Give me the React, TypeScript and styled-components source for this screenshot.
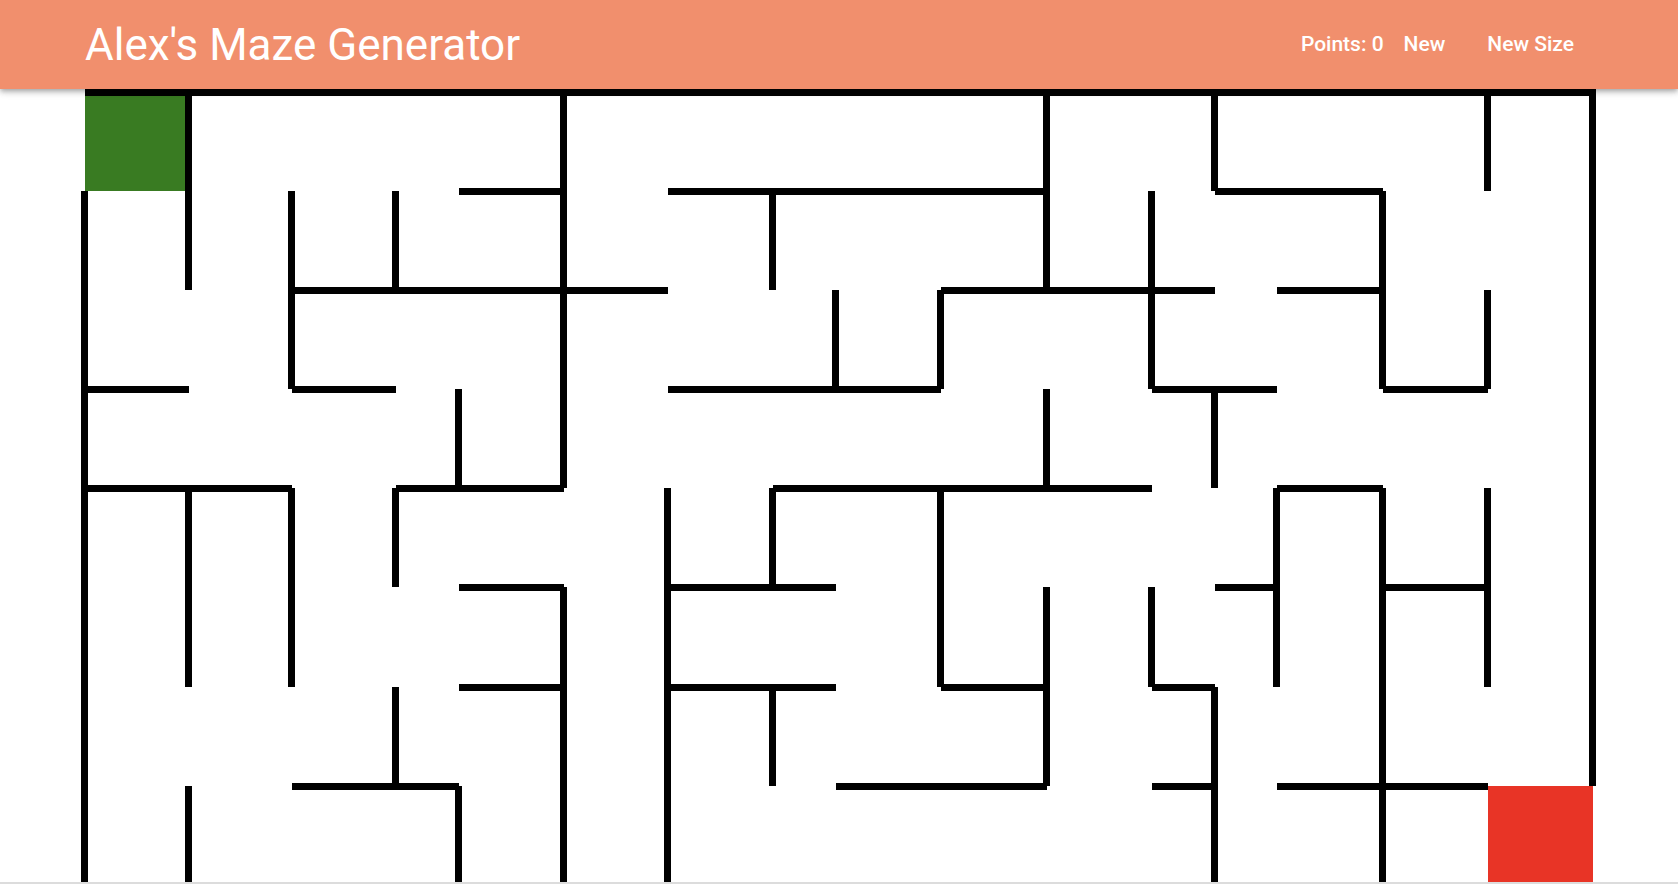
import React from 'react'
import styled, { createGlobalStyle } from 'styled-components'

const GlobalStyle = createGlobalStyle`
  html, body {
    margin: 0;
    padding: 0;
    background: #fff;
  }
  body {
    font-family: Roboto, 'Liberation Sans', Arial, sans-serif;
    overflow: hidden;
  }
`

// horizontal walls: one string per grid line (top of row r), one char per column
const HWALLS = [
  '1111111111111111',
  '0000101111001100',
  '0011110001110100',
  '1010001110011010',
  '1101100111100100',
  '0000101100001010',
  '0000101101010000',
  '0011000011010110',
  '0000000000000000',
]

// vertical walls: one string per row, one char per grid line (left of column c)
const VWALLS = [
  '01000100001010011',
  '11110101001100101',
  '10100100110100111',
  '10001100001010001',
  '11110011010001111',
  '11100110011101111',
  '10010111001010101',
  '11001110000010100',
]

const ROWS = VWALLS.length
const COLS = HWALLS[0].length

type Kind = 'start' | 'end' | 'path'

const AppBar = styled.header`
  position: relative;
  z-index: 2;
  height: 89px;
  background: #f18f6d;
  color: #fff;
  box-shadow: 0 2px 4px -1px rgba(0, 0, 0, 0.2), 0 4px 5px 0 rgba(0, 0, 0, 0.14),
    0 1px 10px 0 rgba(0, 0, 0, 0.12);
`

const Toolbar = styled.div`
  width: calc(100% - 170px);
  height: 100%;
  margin: 0 auto;
  display: flex;
  align-items: center;
  justify-content: space-between;
`

const Title = styled.h1`
  margin: 0;
  font-size: 44px;
  font-weight: 400;
  line-height: 1;
`

const Actions = styled.nav`
  display: flex;
  align-items: center;
  padding-right: 3px;
`

const Points = styled.span`
  font-size: 21px;
  font-weight: 500;
  margin-right: 4px;
`

const NavButton = styled.button`
  min-width: 64px;
  padding: 6px 16px;
  border: 0;
  background: none;
  color: inherit;
  font-family: inherit;
  font-size: 21px;
  font-weight: 500;
  line-height: 1.4;
  cursor: pointer;

  & + & {
    margin-left: 10px;
  }
`

const Main = styled.main`
  box-sizing: border-box;
  height: calc(100vh - 89px);
  padding-top: 3px;
  overflow: hidden;
  border-bottom: 2px solid #dcdcdc;
`

const Board = styled.div`
  display: grid;
  grid-template-columns:
    103.7fr 103.7fr 103.7fr 62.5fr 105fr 104.5fr 105fr 63fr
    105fr 105.5fr 105fr 63.5fr 62fr 105.5fr 105fr 105fr;
  grid-auto-rows: 99.1px;
  width: calc(100% - 170px);
  margin: 0 auto;
`

const Cell = styled.div<{
  $t: boolean
  $r: boolean
  $b: boolean
  $l: boolean
  $kind: Kind
  $edge: string
}>`
  box-sizing: border-box;
  background: ${(p) =>
    p.$kind === 'start' ? '#397b22' : p.$kind === 'end' ? '#e83426' : 'transparent'};
  border-style: solid;
  border-color: #000;
  border-width: ${(p) =>
    `${p.$t ? 4 : 0}px ${p.$r ? 4 : 0}px ${p.$b ? 3 : 0}px ${p.$l ? 3 : 0}px`};
  box-shadow: ${(p) => p.$edge || 'none'};
`

const outerEdges = (r: number, c: number, t: boolean, rt: boolean, l: boolean) => {
  const s: string[] = []
  if (r === 0 && t) s.push('0 -3px 0 #000')
  if (c === 0 && l) s.push('-4px 0 0 #000')
  if (c === COLS - 1 && rt) s.push('3px 0 0 #000')
  if (r === 0 && t && c === COLS - 1 && rt) s.push('3px -3px 0 #000')
  return s.join(', ')
}

const Maze = () => {
  const cells = []
  for (let r = 0; r < ROWS; r++) {
    for (let c = 0; c < COLS; c++) {
      const t = HWALLS[r][c] === '1'
      const b = HWALLS[r + 1][c] === '1'
      const l = VWALLS[r][c] === '1'
      const rt = VWALLS[r][c + 1] === '1'
      const kind: Kind =
        r === 0 && c === 0 ? 'start' : r === ROWS - 1 && c === COLS - 1 ? 'end' : 'path'
      cells.push(
        <Cell
          key={`${r}-${c}`}
          $t={t}
          $r={rt}
          $b={b}
          $l={l}
          $kind={kind}
          $edge={outerEdges(r, c, t, rt, l)}
        />
      )
    }
  }
  return <Board>{cells}</Board>
}

const App = () => {
  return (
    <>
      <GlobalStyle />
      <AppBar>
        <Toolbar>
          <Title>Alex's Maze Generator</Title>
          <Actions>
            <Points>Points: 0</Points>
            <NavButton>New</NavButton>
            <NavButton>New Size</NavButton>
          </Actions>
        </Toolbar>
      </AppBar>
      <Main>
        <Maze />
      </Main>
    </>
  )
}

export default App
